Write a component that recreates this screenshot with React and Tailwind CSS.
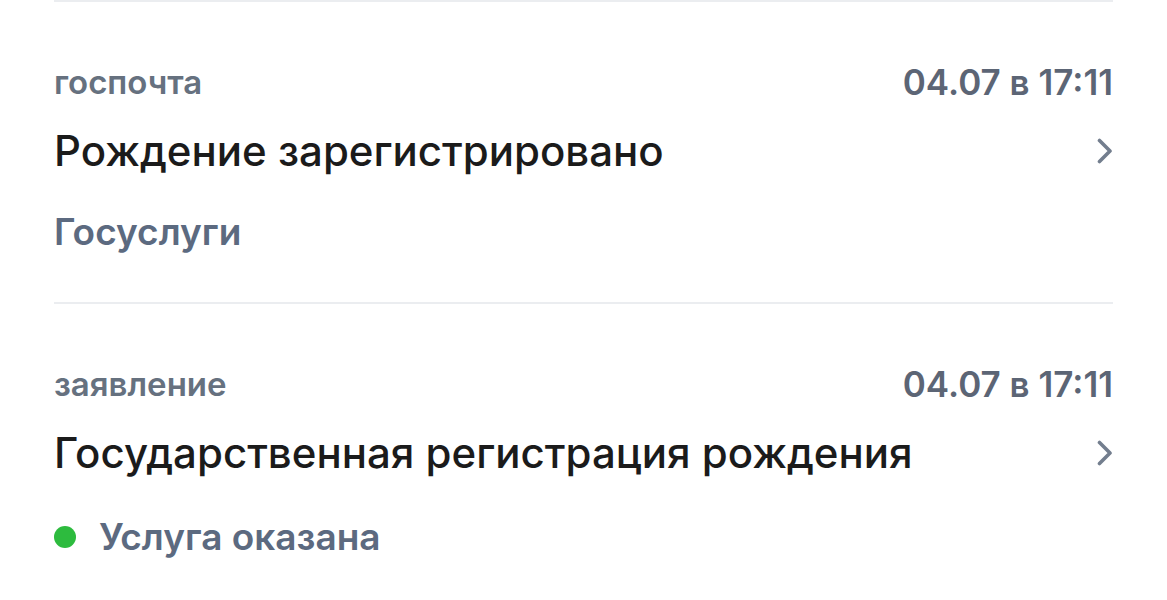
import React from 'react';

const items = [
  {
    kind: 'госпочта',
    date: '04.07 в 17:11',
    title: 'Рождение зарегистрировано',
    sub: 'Госуслуги',
  },
  {
    kind: 'заявление',
    date: '04.07 в 17:11',
    title: 'Государственная регистрация рождения',
    status: 'Услуга оказана',
  },
];

const Chevron = () => (
  <svg width="16" height="26" viewBox="0 0 16 26" fill="none" className="shrink-0">
    <path d="M2.5 2.5L13 13L2.5 23.5" stroke="#737e8e" strokeWidth="3.6" strokeLinecap="round" strokeLinejoin="round" />
  </svg>
);

const App = () => {
  return (
    <div className="min-h-screen w-full bg-white px-[54px]" style={{ fontFamily: 'Inter, "Noto Sans", sans-serif' }}>
      {items.map((item, i) => (
        <div key={i} className="border-t-2 border-[#ebedf0] pt-[63px] pb-[52px]">
          {/* header row */}
          <div className="flex items-center justify-between leading-none">
            <span className="text-[33px] font-semibold text-[#66717f]">{item.kind}</span>
            <span className="text-[35px] font-semibold text-[#5c6575]">{item.date}</span>
          </div>

          {/* title */}
          <div className="mt-[30px] flex items-center justify-between">
            <span className="text-[42px] font-medium leading-none text-[#1b1b1b]">{item.title}</span>
            <Chevron />
          </div>

          {item.sub && (
            <div className="mt-[41px] text-[37px] font-semibold leading-none text-[#5c6a80]">{item.sub}</div>
          )}
          {item.status && (
            <div className="mt-[44px] flex items-center gap-[23px]">
              <span className="h-[22px] w-[22px] shrink-0 rounded-full bg-[#2dbb3e]" />
              <span className="text-[37px] font-semibold leading-none text-[#5c6a80]">{item.status}</span>
            </div>
          )}
        </div>
      ))}
    </div>
  );
};

export default App;
